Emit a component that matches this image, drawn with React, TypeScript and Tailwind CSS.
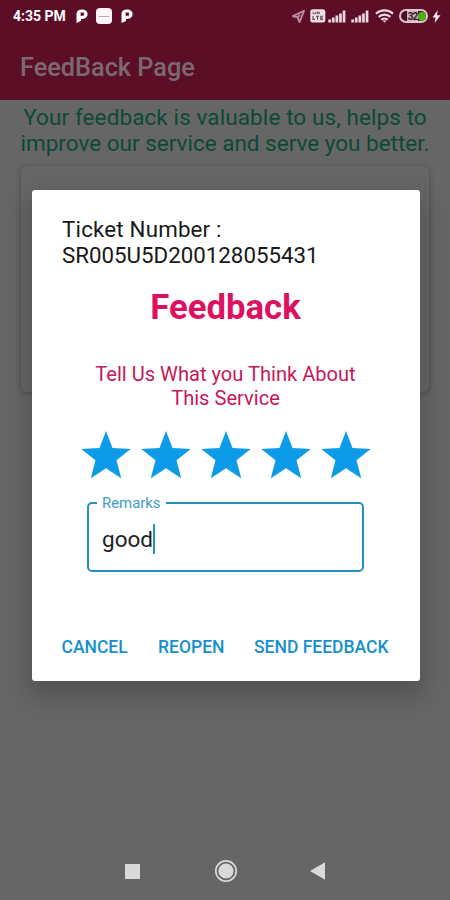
import React from "react";

const SIGNAL_BARS = [3, 5, 7, 9, 12];

function Signal({ className }: { className: string }) {
  return (
    <svg className={className} width="18" height="13" viewBox="0 0 18 13" fill="#ecd8e0">
      {SIGNAL_BARS.map((h, i) => (
        <rect key={h} x={0.3 + i * 3.6} y={12.5 - h} width="2.7" height={h} />
      ))}
    </svg>
  );
}

function ParkIcon({ className }: { className: string }) {
  return (
    <svg className={className} width="12" height="14" viewBox="0 0 12 14" fill="#fff">
      <path fillRule="evenodd" d="M.5 4.500C.8 1.700 3 .4 6 .4c3.300 0 5.600 1.700 5.600 4.700S9.500 9.900 6.300 9.900H5v2.200L.5 13.900V6.400zM4.600 3.600v3.200h1.700c1.300 0 1.900-.6 1.900-1.600s-.6-1.600-1.900-1.600z" />
    </svg>
  );
}

function StatusBar() {
  return (
    <div className="flex h-8 items-center justify-between pl-[13px] pr-[9px] text-white">
      <div className="flex shrink-0 items-center">
        <span className="w-[63px] whitespace-nowrap text-[14px] font-bold leading-4">4:35 PM</span>
        <ParkIcon className="-mt-px block" />
        <div className="ml-2 flex h-[16px] w-[16px] items-center justify-center rounded-[4px] bg-[#fdf5f8]">
          <div className="h-px w-[10px] bg-[#b5a9ae]" />
        </div>
        <ParkIcon className="-mt-px ml-[9px] block" />
      </div>
      <div className="flex shrink-0 items-center">
        <svg width="15" height="15" viewBox="0 0 15 15" fill="none" stroke="#b98a9b" strokeWidth="1.900" strokeLinejoin="round">
          <path d="M13 1.800 1.800 7.200 6.500 8.300 8.600 13z" />
          <path d="M6.500 8.300 9 6" />
        </svg>
        <svg className="ml-[4px]" width="16" height="14" viewBox="0 0 16 14">
          <rect x="0.300" y="0.300" width="15" height="13.200" rx="2.500" fill="#f0dde4" />
          <path d="M3 2.800v1.800h2.500V2.800M7 2.800v1.800h2.500V3.200H7" fill="none" stroke="#5b4650" strokeWidth="0.800" />
          <path d="M3 7v3.500h2M6 7.300h3M7.500 7.300v3.500M13 7.300h-2.200v3.200H13M10.800 9H13" fill="none" stroke="#5b4650" strokeWidth="1.100" />
        </svg>
        <Signal className="ml-[2px]" />
        <Signal className="ml-[5px]" />
        <svg className="ml-[6px]" width="19" height="14" viewBox="0 0 19 14" fill="none" stroke="#f0dde4" strokeWidth="2.200">
          <path d="M1 4.800a12.200 12.200 0 0 1 17 0M3.700 7.900a8.400 8.400 0 0 1 11.600 0M6.300 10.800a4.700 4.700 0 0 1 6.400 0" />
          <path d="M7.600 11.600h3.800l-1.900 2.200z" fill="#f0dde4" stroke="none" />
        </svg>
        <div className="ml-[5px] flex h-[14px] w-[29px] items-center rounded-full border-2 border-[#dcc5ce] bg-[#4d0c20]">
          <span className="ml-[6px] h-[10px] w-[11px] shrink-0 bg-[#c8b3bc] text-center text-[10px] font-bold leading-[11px] tracking-[-1px] text-[#3d1522]">32</span>
          <span className="h-[9px] w-[8px] rounded-full bg-[#4fae16]" />
        </div>
        <svg className="ml-[4px]" width="9" height="13" viewBox="0 0 9 13" fill="#f6e8ed">
          <path d="M5.800 0 .5 7.500h3L2.700 13 8.500 5.200H5z" />
        </svg>
      </div>
    </div>
  );
}

function Star() {
  return (
    <svg width="50" height="48" viewBox="0 0 50 48" fill="#0b9be8">
      <path d="M25 0 31.500 17.100 49.700 17.900 35.500 29.200 40.200 47.300 25 37.300 9.800 47.300 14.500 29.200.3 17.900 18.500 17.100z" />
    </svg>
  );
}

function FeedbackDialog() {
  return (
    <section className="absolute left-[31.500px] top-[190px] flex h-[491px] w-[388px] flex-col rounded-[3px] bg-white shadow-[0_12px_24px_5px_rgba(0,0,0,0.18)]">
      <p className="ml-[30.500px] mt-[26px] whitespace-nowrap text-[22.300px] leading-[26px] text-[#181818]">
        <span className="tracking-[0.200px]">Ticket Number :</span>
        <br />
        SR005U5D200128055431
      </p>
      <h2 className="mt-[18px] text-center text-[34.700px] font-bold leading-[42px] text-[#dc1260]">Feedback</h2>
      <p className="mt-[34px] text-center text-[20.100px] leading-[24px] text-[#c7175b]">
        Tell Us What you Think About
        <br />
        This Service
      </p>
      <div className="mt-[21px] flex justify-center gap-[10px]">
        {[1, 2, 3, 4, 5].map((n) => (
          <Star key={n} />
        ))}
      </div>
      <fieldset className="ml-[55.500px] mt-[17px] h-[76px] w-[277px] rounded-[5px] border-2 border-[#2390be] pl-[8px]">
        <legend className="h-[14px] px-[5px] text-[14.900px] leading-[15px] text-[#3d9dca]">Remarks</legend>
        <div className="ml-[5px] mt-[13px] flex h-[31px] items-center text-[22.500px] text-[#222]">
          <span className="pt-[2px]">good</span>
          <span className="h-[30px] w-[2px] bg-[#2390be]" />
        </div>
      </fieldset>
      <div className="mt-[63px] flex whitespace-nowrap pl-[30px] text-[17.500px] font-medium leading-[24px] text-[#168fce]">
        <button className="w-[96.500px] text-left">CANCEL</button>
        <button className="w-[96px] text-left">REOPEN</button>
        <button className="text-left">SEND FEEDBACK</button>
      </div>
    </section>
  );
}

function NavigationBar() {
  return (
    <nav className="mr-[1px] mt-auto flex h-[58px] items-center justify-center">
      <div className="h-[15px] w-[15px] bg-[#d9d9d9]" />
      <svg className="ml-[74px]" width="24" height="24" viewBox="0 0 24 24" fill="none" stroke="#d9d9d9">
        <circle cx="12" cy="12" r="10.200" strokeWidth="1.700" />
        <circle cx="12" cy="12" r="7.600" fill="#d9d9d9" stroke="none" />
      </svg>
      <svg className="ml-[72px]" width="15" height="18" viewBox="0 0 15 18" fill="#d9d9d9">
        <path d="M15 .3v17.400L0 9z" />
      </svg>
    </nav>
  );
}

export default function App() {
  return (
    <main className="relative flex h-[900px] w-[450px] flex-col overflow-hidden bg-[#666] font-[Roboto,sans-serif]">
      <header className="h-[100px] bg-[#5c0e27]">
        <StatusBar />
        <h1 className="ml-[20px] mt-[20px] text-[25.300px] font-medium leading-[32px] text-[#7b6970]">FeedBack Page</h1>
      </header>
      <p className="mt-[4px] whitespace-nowrap text-center text-[22.500px] leading-[26px] text-[#0d4937]">
        <span className="tracking-[0.100px]">Your feedback is valuable to us, helps to</span>
        <br />
        improve our service and serve you better.
      </p>
      <div className="mx-[21px] mt-[10px] h-[226px] rounded-[6px] bg-[#666] shadow-[0_1px_5px_1px_rgba(0,0,0,0.2)]" />
      <NavigationBar />
      <FeedbackDialog />
    </main>
  );
}
